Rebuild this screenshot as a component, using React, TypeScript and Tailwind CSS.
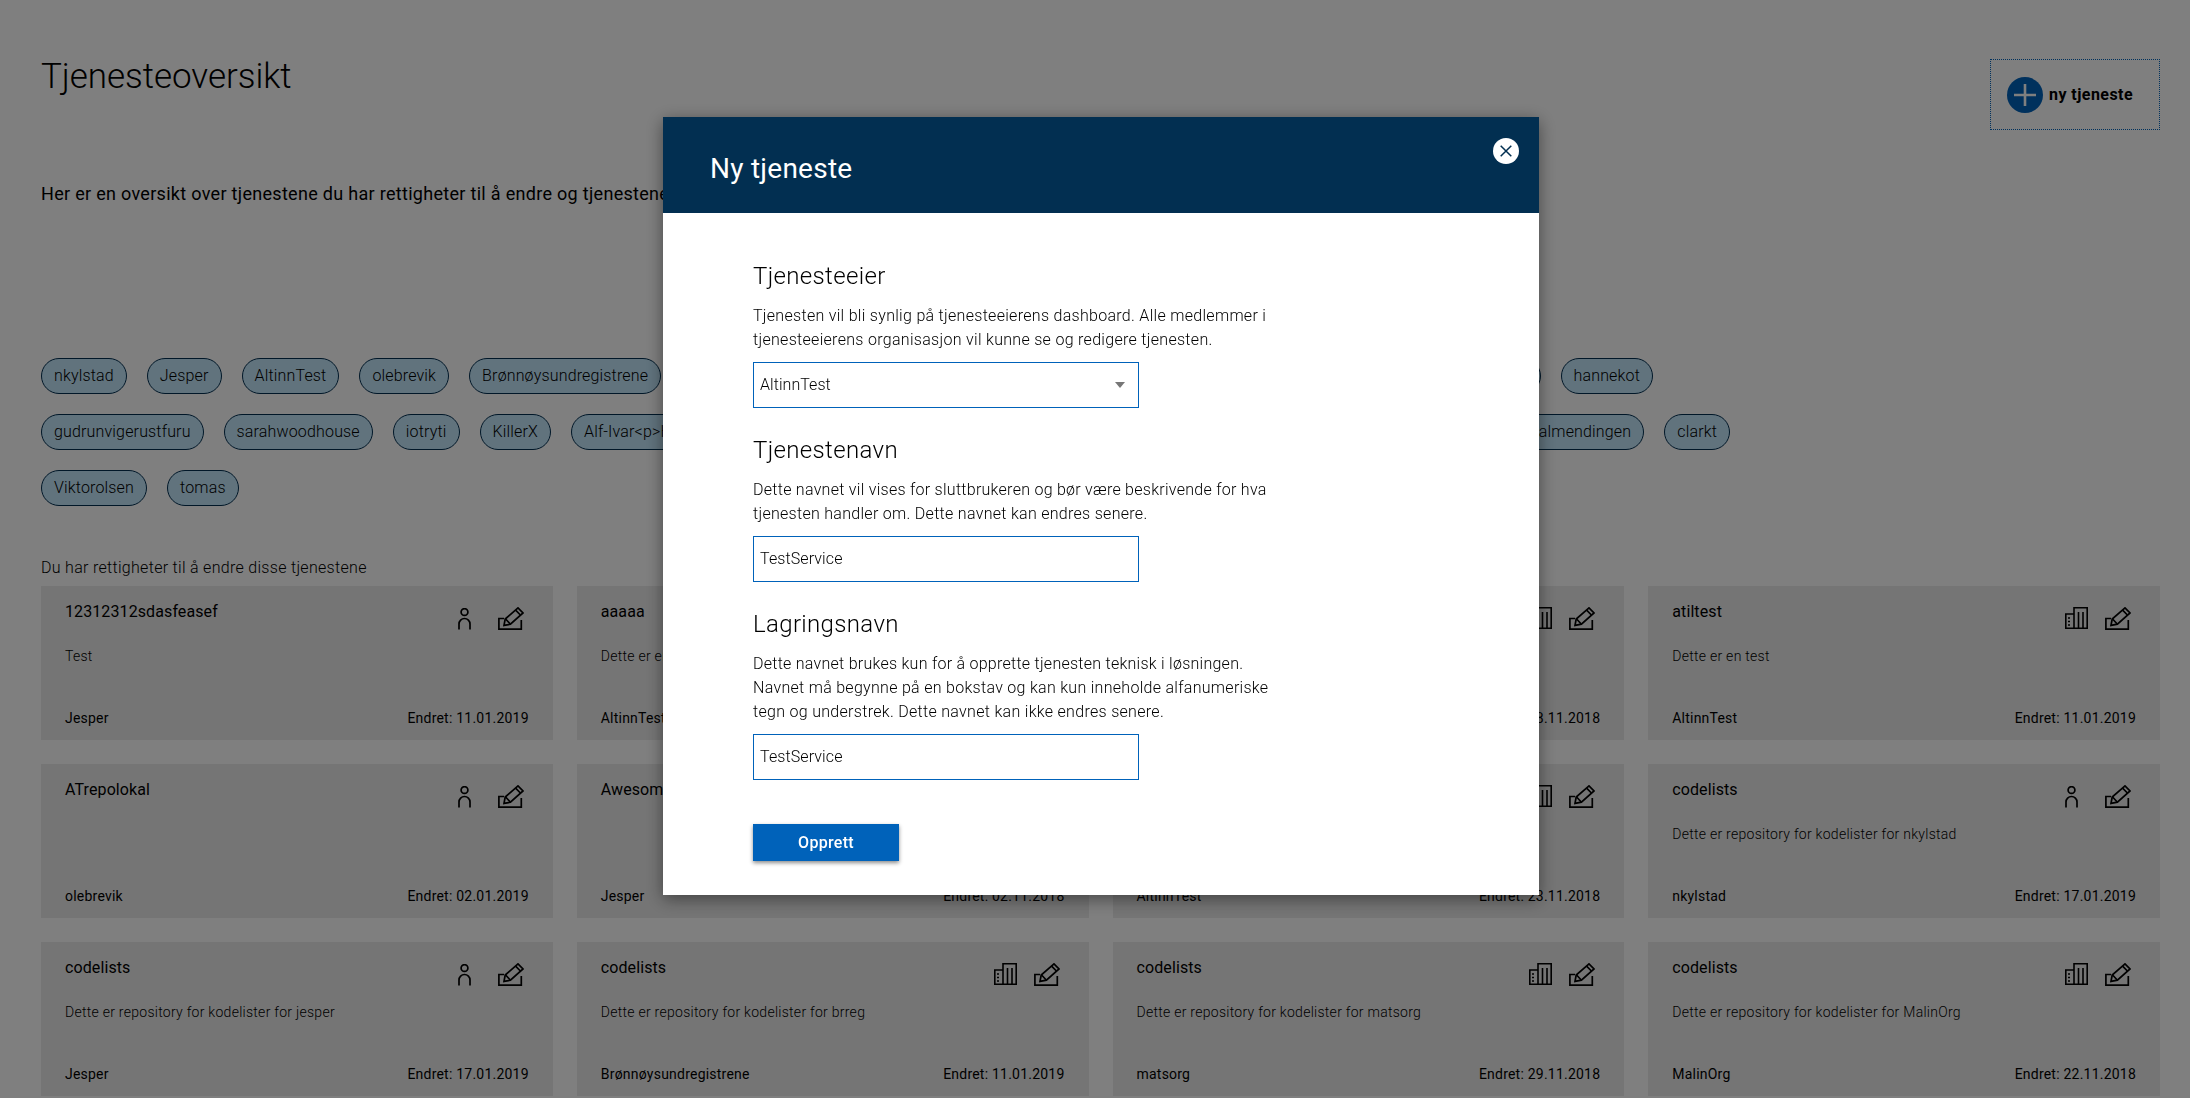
import React from "react";

const PersonIcon = () => (
  <svg width="13" height="22" viewBox="0 0 13 22" fill="none" stroke="currentColor" strokeWidth="1.7" className="mr-[27px] mt-[1px]">
    <circle cx="6.5" cy="4" r="3.4" />
    <path d="M1 21.5V16a5.5 5.5 0 0 1 11 0v5.5" />
  </svg>
);

const BuildingIcon = () => (
  <svg width="23" height="22" viewBox="0 0 23 22" fill="none" stroke="currentColor" strokeWidth="1.6" className="mr-[17px]">
    <path d="M9 7H.8v14.2H9" />
    <path d="M9 21.2V.8h13.2v20.4H9" />
    <path d="M13.5 5v16M18 5v16" />
    <path d="M3 11h3M3 14.5h3M3 18h3" strokeDasharray="2 1" />
  </svg>
);

const PencilIcon = () => (
  <svg width="26" height="23" viewBox="0 0 26 23" fill="none" stroke="currentColor" strokeWidth="1.7">
    <path d="M6 11.5H.9v10.6h22.4V13" />
    <path d="M6 18.4 7.2 12 20 .9l5 5L12.4 17.2 6 18.4Z" />
    <path d="M7.6 12l4.6 5M17.6 3.2l4.8 4.8" />
  </svg>
);

type Card = { t: string; d: string; o: string; e: string; k: "p" | "b" };

const cards: Card[] = [
  { t: "12312312sdasfeasef", d: "Test", o: "Jesper", e: "11.01.2019", k: "p" },
  { t: "aaaaa", d: "Dette er en test", o: "AltinnTest", e: "28.11.2018", k: "b" },
  { t: "altinn-test", d: "Dette er en test", o: "AltinnTest", e: "28.11.2018", k: "b" },
  { t: "atiltest", d: "Dette er en test", o: "AltinnTest", e: "11.01.2019", k: "b" },
  { t: "ATrepolokal", d: "", o: "olebrevik", e: "02.01.2019", k: "p" },
  { t: "Awesome", d: "", o: "Jesper", e: "02.11.2018", k: "p" },
  { t: "bakgrunn", d: "", o: "AltinnTest", e: "23.11.2018", k: "b" },
  { t: "codelists", d: "Dette er repository for kodelister for nkylstad", o: "nkylstad", e: "17.01.2019", k: "p" },
  { t: "codelists", d: "Dette er repository for kodelister for jesper", o: "Jesper", e: "17.01.2019", k: "p" },
  { t: "codelists", d: "Dette er repository for kodelister for brreg", o: "Brønnøysundregistrene", e: "11.01.2019", k: "b" },
  { t: "codelists", d: "Dette er repository for kodelister for matsorg", o: "matsorg", e: "29.11.2018", k: "b" },
  { t: "codelists", d: "Dette er repository for kodelister for MalinOrg", o: "MalinOrg", e: "22.11.2018", k: "b" },
];

const Chip = ({ name, grow }: { name: string; grow?: boolean }) => (
  <div
    className={
      grow
        ? "flex-1 min-w-0 h-9 flex items-center px-3 rounded-[18px] border border-[#022f51] bg-[#c2e6fa] text-[16px] leading-none whitespace-nowrap overflow-hidden"
        : "h-9 flex items-center px-3 rounded-[18px] border border-[#022f51] bg-[#c2e6fa] text-[16px] font-light tracking-[0.16px] leading-none whitespace-nowrap"
    }
  >
    {name}
  </div>
);

const Section = ({ title, children, body }: { title: string; body: React.ReactNode; children: React.ReactNode }) => (
  <div className="w-[530px]">
    <h2 className="text-[24px] leading-8 font-light tracking-[0.35px] text-black mb-3">{title}</h2>
    <div className="text-[16px] leading-6 font-light text-black mb-[10px]">{body}</div>
    {children}
  </div>
);

const TextField = ({ value }: { value: string }) => (
  <input
    readOnly
    value={value}
    className="block w-[386px] h-[46px] border border-[#0062ba] px-[6px] pb-[2px] text-[16px] font-light tracking-[0.1px] text-black outline-none"
  />
);

export default function App() {
  return (
    <div className="relative h-[1098px] overflow-hidden bg-white text-black font-['Roboto',sans-serif]">
      <div className="pl-[41px] pr-[30px] pt-[55px]">
        <div className="flex items-start justify-between">
          <h1 className="mt-[1px] text-[35px] leading-[42px] font-light tracking-[-0.05px]">Tjenesteoversikt</h1>
          <button className="mt-1 w-[170px] h-[71px] border border-dotted border-[#0062ba] flex items-center pl-4">
            <span className="w-9 h-9 rounded-full bg-[#0062ba] flex items-center justify-center">
              <svg width="24" height="24" viewBox="0 0 24 24" fill="none" stroke="white" strokeWidth="2.6">
                <path d="M12 1v22M1 12h22" />
              </svg>
            </span>
            <span className="ml-[6px] text-[16px] font-bold tracking-[0.45px]">ny tjeneste</span>
          </button>
        </div>

        <p className="mt-[52px] text-[18px] leading-6 font-normal tracking-[0.3px]">
          Her er en oversikt over tjenestene du har rettigheter til å endre og tjenestene du har leserettigheter til.
        </p>

        <div className="mt-[152px] flex flex-col gap-5">
          <div className="w-[1612px] flex gap-5">
            <Chip name="nkylstad" />
            <Chip name="Jesper" />
            <Chip name="AltinnTest" />
            <Chip name="olebrevik" />
            <Chip name="Brønnøysundregistrene" />
            <Chip name="matsorg" grow />
            <Chip name="hannekot" />
          </div>
          <div className="w-[1689px] flex gap-5">
            <Chip name="gudrunvigerustfuru" />
            <Chip name="sarahwoodhouse" />
            <Chip name="iotryti" />
            <Chip name="KillerX" />
            <Chip name="Alf-Ivar<p>Hei</p>" />
            <Chip name="MalinOrg" grow />
            <Chip name="ingrid almendingen" />
            <Chip name="clarkt" />
          </div>
          <div className="flex gap-5">
            <Chip name="Viktorolsen" />
            <Chip name="tomas" />
          </div>
        </div>

        <p className="mt-[50px] text-[16px] leading-6 font-light tracking-[0.3px]">Du har rettigheter til å endre disse tjenestene</p>

        <div className="mt-[6px] grid grid-cols-4 gap-x-6 gap-y-6">
          {cards.map((c, i) => (
            <div key={i} className="h-[154px] bg-[#ebebeb] flex flex-col px-6 pt-[14px]">
              <div className="h-[44px] flex items-start justify-between">
                <span className="text-[16px] leading-6 tracking-[0.1px]">{c.t}</span>
                <div className="mt-[7px] flex items-start mr-[5px]">
                  {c.k === "p" ? <PersonIcon /> : <BuildingIcon />}
                  <PencilIcon />
                </div>
              </div>
              <p className="mt-[2px] h-5 text-[14px] leading-5 font-light tracking-[0.27px]">{c.d}</p>
              <div className="mt-auto pb-[12px] flex justify-between text-[14px] leading-5 tracking-[0.22px]">
                <span>{c.o}</span>
                <span>Endret: {c.e}</span>
              </div>
            </div>
          ))}
        </div>
      </div>

      <div className="fixed inset-0 bg-black/50 flex justify-center items-start pt-[117px] pl-[12px]">
        <div className="w-[876px] h-[778px] bg-white shadow-[0_4px_16px_rgba(0,0,0,0.45)]">
          <div className="relative h-[96px] bg-[#022f51] pl-[47px] pt-[32px] text-white">
            <h2 className="text-[28px] leading-10 font-normal tracking-[0.25px]">Ny tjeneste</h2>
            <span className="absolute right-[20px] top-[21px] w-[26px] h-[26px] rounded-full bg-white flex items-center justify-center">
              <svg width="12" height="12" viewBox="0 0 12 12" fill="none" stroke="#022f51" strokeWidth="1.5">
                <path d="M.7.7l10.6 10.6M11.3.7.7 11.3" />
              </svg>
            </span>
          </div>
          <div className="pl-[90px] pt-[47px] flex flex-col gap-[26px]">
            <Section
              title="Tjenesteeier"
              body={
                <>
                  <p className="whitespace-nowrap tracking-[0.295px]">Tjenesten vil bli synlig på tjenesteeierens dashboard. Alle medlemmer i</p>
                  <p className="whitespace-nowrap tracking-[0.3px]">tjenesteeierens organisasjon vil kunne se og redigere tjenesten.</p>
                </>
              }
            >
              <div className="w-[386px] h-[46px] border border-[#0062ba] pl-[6px] pr-[13px] flex items-center justify-between text-[16px] font-light">
                <span className="text-black tracking-[0.05px]">AltinnTest</span>
                <svg width="10" height="6" viewBox="0 0 10 6" fill="#777">
                  <path d="M0 0h10L5 6z" />
                </svg>
              </div>
            </Section>
            <Section
              title="Tjenestenavn"
              body={
                <>
                  <p className="whitespace-nowrap tracking-[0.27px]">Dette navnet vil vises for sluttbrukeren og bør være beskrivende for hva</p>
                  <p className="whitespace-nowrap tracking-[0.29px]">tjenesten handler om. Dette navnet kan endres senere.</p>
                </>
              }
            >
              <TextField value="TestService" />
            </Section>
            <Section
              title="Lagringsnavn"
              body={
                <>
                  <p className="whitespace-nowrap tracking-[0.26px]">Dette navnet brukes kun for å opprette tjenesten teknisk i løsningen.</p>
                  <p className="whitespace-nowrap tracking-[0.29px]">Navnet må begynne på en bokstav og kan kun inneholde alfanumeriske</p>
                  <p className="whitespace-nowrap tracking-[0.3px]">tegn og understrek. Dette navnet kan ikke endres senere.</p>
                </>
              }
            >
              <TextField value="TestService" />
            </Section>
            <button className="mt-[18px] w-[146px] h-[37px] bg-[#0062ba] text-white text-[16px] font-medium tracking-[0.3px] shadow-[0_2px_4px_rgba(0,0,0,0.45)]">
              Opprett
            </button>
          </div>
        </div>
      </div>
    </div>
  );
}
